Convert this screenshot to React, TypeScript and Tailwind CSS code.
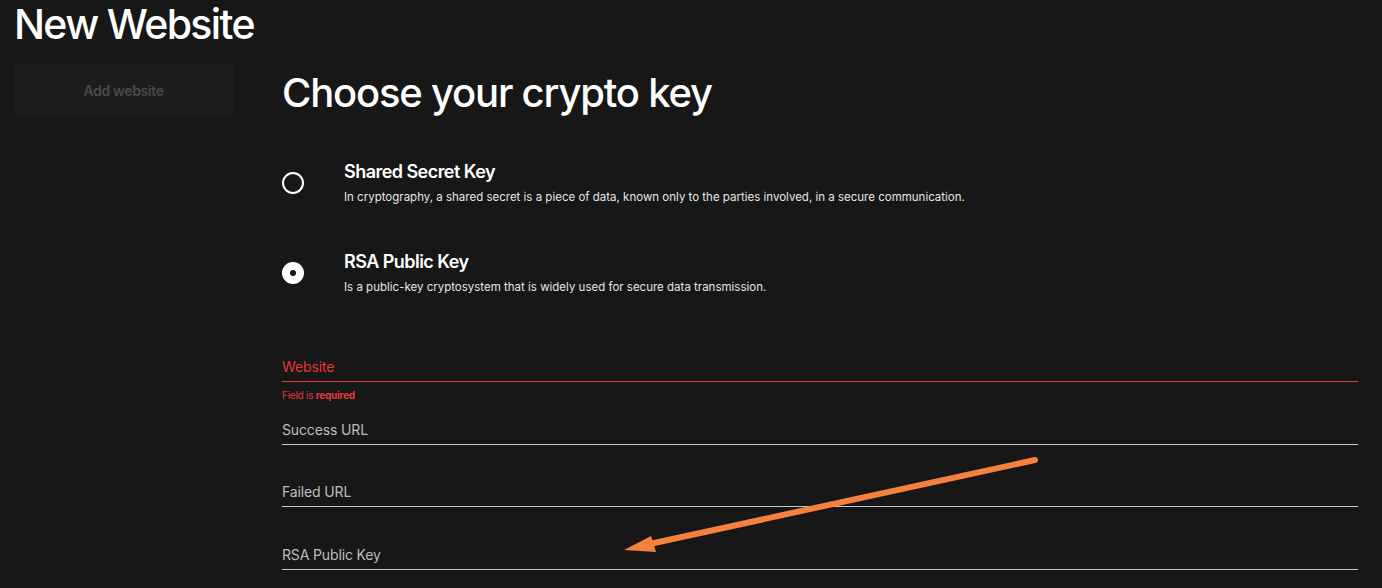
import React from 'react';

const font = { fontFamily: 'Inter, "Noto Sans", sans-serif' };

function Radio({ checked }: { checked?: boolean }) {
  return checked ? (
    <div className="w-[22px] h-[22px] rounded-full bg-white flex items-center justify-center">
      <div className="w-[6px] h-[6px] rounded-full bg-[#171717]" />
    </div>
  ) : (
    <div className="w-[22px] h-[22px] rounded-full border-2 border-white" />
  );
}

function Field({ label, error }: { label: string; error?: boolean }) {
  return (
    <div className="flex flex-col">
      <div
        className={
          'h-[30px] flex items-center text-[14px] tracking-[-0.01em] border-b ' +
          (error ? 'text-[#e5383b] border-[#e5383b]' : 'text-[#bdbdbd] border-[#c9c9c9]')
        }
      >
        {label}
      </div>
      {error && (
        <div className="text-[10px] leading-[15px] text-[#e5383b] mt-[6px] tracking-tight">
          Field is <span className="font-bold">required</span>
        </div>
      )}
    </div>
  );
}

export default function App() {
  return (
    <div style={font} className="relative w-full h-[588px] bg-[#171717] text-white overflow-hidden px-[14px]">
      <h1 className="text-[41px] leading-[48px] font-medium tracking-[-0.04em]">New Website</h1>
      <div className="flex gap-[49px] mt-[16px]">
        {/* Sidebar */}
        <div className="w-[219px] shrink-0">
          <button className="w-full h-[52px] bg-[#1c1c1c] text-[#4a4a4a] text-[14px] font-semibold tracking-tight">
            Add website
          </button>
        </div>
        {/* Main */}
        <div className="flex-1 pr-[10px]">
          <h2 className="text-[40px] leading-[50px] font-medium tracking-[-0.03em] mt-[4px]">Choose your crypto key</h2>
          <div className="flex flex-col gap-[44px] mt-[42px]">
            <div className="flex items-center gap-[40px]">
              <Radio />
              <div className="flex flex-col">
                <span className="text-[18px] font-semibold tracking-[-0.03em] leading-[24px]">Shared Secret Key</span>
                <span className="text-[11.5px] text-[#e6e6e6] leading-[18px] mt-[4px]">
                  In cryptography, a shared secret is a piece of data, known only to the parties involved, in a secure communication.
                </span>
              </div>
            </div>
            <div className="flex items-center gap-[40px]">
              <Radio checked />
              <div className="flex flex-col">
                <span className="text-[18px] font-semibold tracking-[-0.03em] leading-[24px]">RSA Public Key</span>
                <span className="text-[11.5px] text-[#e6e6e6] leading-[18px] mt-[4px]">
                  Is a public-key cryptosystem that is widely used for secure data transmission.
                </span>
              </div>
            </div>
          </div>
          <div className="flex flex-col mt-[56px]">
            <Field label="Website" error />
            <div className="mt-[12px]"><Field label="Success URL" /></div>
            <div className="mt-[32px]"><Field label="Failed URL" /></div>
            <div className="mt-[33px]"><Field label="RSA Public Key" /></div>
          </div>
        </div>
      </div>
      {/* annotation arrow */}
      <svg className="absolute left-0 top-0 pointer-events-none" width="1382" height="588">
        <line x1="1035" y1="460" x2="645" y2="545" stroke="#f5813f" strokeWidth="6" strokeLinecap="round" />
        <polygon points="624,550 651,536 656,552" fill="#f5813f" />
      </svg>
    </div>
  );
}
